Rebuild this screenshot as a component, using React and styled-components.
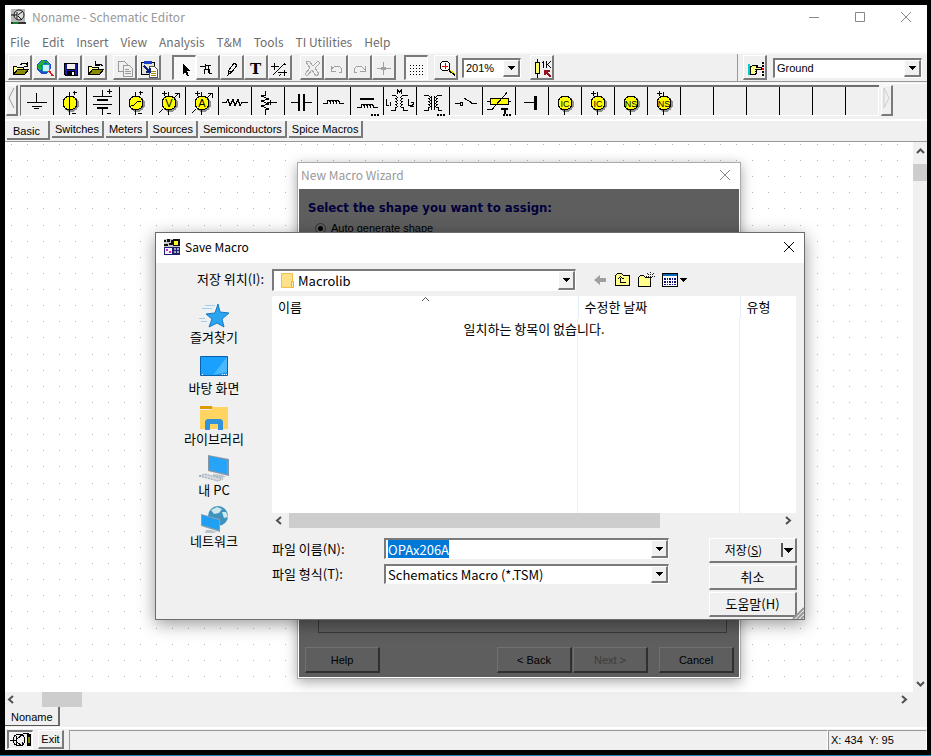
import React from 'react';
import styled, { createGlobalStyle, css } from 'styled-components';

const UI = '"Noto Sans CJK KR", "Noto Sans", sans-serif';
const CLASSIC = '"Liberation Sans", Arial, sans-serif';

const GlobalStyle = createGlobalStyle`
  * {
    box-sizing: border-box;
  }
  body {
    margin: 0;
    background: #000;
    font-family: ${CLASSIC};
    font-size: 11px;
    line-height: 16px;
    color: #000;
  }
  button, input, select {
    font: inherit;
    color: inherit;
    margin: 0;
    padding: 0;
    border-radius: 0;
  }
`;

const raised = css`
  border-style: solid;
  border-width: 1px 2px 2px 1px;
  border-color: #fff #7a7a7a #7a7a7a #fff;
`;

const sunken = css`
  border-style: solid;
  border-width: 2px 1px 1px 2px;
  border-color: #7a7a7a #fff #fff #7a7a7a;
`;

const Screen = styled.div`
  height: 100vh;
  padding: 5px 4px 5px 5px;
  border-bottom: 1px solid #1c82b4;
  background: #000;
`;

const AppWindow = styled.div`
  position: relative;
  display: flex;
  flex-direction: column;
  height: 100%;
  overflow: hidden;
  background: #f0f0f0;
`;

const TitleBar = styled.header`
  display: flex;
  align-items: center;
  gap: 5px;
  height: 25px;
  padding: 0 15px 1px 5px;
  background: #fff;
  color: #999;
`;

const Title = styled.h1`
  flex: 1;
  margin: 0;
  font: 400 12px/16px ${UI};
`;

const WindowButtons = styled.div`
  display: flex;
  gap: 34px;
`;

const PlainButton = styled.button`
  display: flex;
  border: 0;
  background: none;
`;

const MenuBar = styled.nav`
  display: flex;
  gap: 12px;
  height: 22px;
  padding: 4px 5px 0;
  background: #fff;
`;

const MenuItem = styled.a`
  color: #6d6d6d;
  font: 12px/16px ${UI};
  text-decoration: none;
`;

const Toolbar = styled.div`
  display: flex;
  align-items: center;
  height: 30px;
  border-top: 2px solid #fafafa;
  border-bottom: 1px solid #999;
  padding-left: 3px;
`;

const ToolGroup = styled.div`
  display: flex;
  align-items: center;
  gap: ${p => p.$gap || 0}px;
  margin-right: ${p => p.$after || 0}px;
`;

const ToolButton = styled.button`
  display: block;
  width: 24px;
  height: 25px;
  background: ${p => (p.$on ? '#f8f8f8' : '#f0f0f0')};
  ${p => (p.$on ? sunken : raised)}

  svg {
    display: block;
  }
`;

const Grip = styled.div`
  width: 1px;
  height: 27px;
  margin-right: ${p => p.$after || 0}px;
  margin-left: auto;
  background: #999;
`;

const ComboFrame = styled.div`
  position: relative;
  flex: ${p => (p.$width ? 'none' : 1)};
  width: ${p => (p.$width ? `${p.$width}px` : 'auto')};
  height: ${p => p.$height || 20}px;
  background: #fff;
  ${sunken}

  select, input {
    display: block;
    width: 100%;
    height: 100%;
    padding: 0 20px 0 ${p => p.$indent || 2}px;
    border: 0;
    outline: 0;
    background: #fff;
    appearance: none;
  }
  input::selection {
    background: #0078d7;
    color: #fff;
  }
`;

const Drop = styled.span`
  position: absolute;
  top: 0;
  right: 0;
  bottom: 0;
  display: flex;
  align-items: center;
  justify-content: center;
  width: 17px;
  background: #f0f0f0;
  pointer-events: none;
  ${raised}
`;

const ComboIcon = styled.span`
  position: absolute;
  top: 1px;
  left: 6px;
  display: flex;
  pointer-events: none;
`;

const PartsRow = styled.div`
  display: flex;
  gap: 2px;
  height: 38px;
  margin-top: 1px;
  padding: 1px 0 3px 1px;
  border-top: 1px solid #fff;
  border-bottom: 2px solid #fff;
`;

const PartsScroll = styled.button`
  width: 12px;
  background: #f0f0f0;
  ${raised}
`;

const Parts = styled.div`
  display: flex;
  border-top: 2px solid #6d6d6d;
  border-left: 1px solid #6d6d6d;
  border-bottom: 1px solid #fff;
`;

const Part = styled.button`
  width: 33px;
  border: 0;
  border-right: ${p => (p.$last ? '1px solid #fff' : '1px solid #000')};
  background: #f0f0f0;

  svg {
    display: block;
  }
`;

const Tabs = styled.div`
  display: flex;
  align-items: flex-start;
  gap: 2px;
  height: 21px;
  padding-left: 2px;
  border-bottom: 1px solid #999;
`;

const Tab = styled.button`
  height: ${p => (p.$on ? 19 : 17)}px;
  padding: 0 ${p => (p.$on ? 8 : 3)}px 0 ${p => (p.$on ? 6 : 3)}px;
  border: 0;
  border-right: 2px solid #7a7a7a;
  border-bottom: 2px solid #7a7a7a;
  background: #f0f0f0;
  line-height: ${p => (p.$on ? 20 : 17)}px;
`;

const Workspace = styled.main`
  display: flex;
  flex: 1;
  min-height: 0;
`;

const Sheet = styled.div`
  flex: 1;
  min-width: 0;
  overflow: hidden;
  background: #fff;

  svg {
    display: block;
  }
`;

const ScrollBar = styled.div`
  display: flex;
  flex-direction: ${p => (p.$vertical ? 'column' : 'row')};
  align-items: center;
  flex: none;
  width: ${p => (p.$vertical ? '14px' : 'auto')};
  height: ${p => (p.$vertical ? 'auto' : '15px')};
  padding: ${p => (p.$vertical ? '4px 0 3px' : `0 ${p.$end || 4}px 0 ${p.$start || 1}px`)};
  background: #f0f0f0;
`;

const Thumb = styled.div`
  width: ${p => (p.$vertical ? '100%' : p.$length)};
  height: ${p => (p.$vertical ? p.$length : '100%')};
  margin: ${p => (p.$vertical ? `${p.$before}px 0 auto` : `0 auto 0 ${p.$before}px`)};
  background: #cdcdcd;
`;

const DocTabs = styled.div`
  display: flex;
  align-items: flex-start;
  height: 21px;
  border-bottom: 1px solid #fff;
`;

const DocTab = styled.button`
  height: 19px;
  padding: 2px 5px 0 6px;
  border: 0;
  border-right: 2px solid #6d6d6d;
  border-bottom: 1px solid #555;
  background: #f0f0f0;
`;

const StatusBar = styled.footer`
  display: flex;
  height: 22px;
  padding: 1px 0 0 2px;
  border-top: 1px solid #fff;
`;

const StatusTool = styled.button`
  width: 26px;
  height: 19px;
  margin-right: 5px;
  background: #f0f0f0;
  line-height: 16px;
  ${p => (p.$on ? sunken : raised)}

  svg {
    display: block;
  }
`;

const StatusCell = styled.div`
  flex: ${p => (p.$width ? 'none' : 1)};
  width: ${p => (p.$width ? `${p.$width}px` : 'auto')};
  padding: 2px 2px 0;
  border-top: 1px solid #999;
  border-left: 1px solid #999;
  border-right: 1px solid #fff;
  line-height: 14px;
  white-space: pre;
`;

// Floating windows
const Wizard = styled.section`
  position: absolute;
  top: 157px;
  left: 292px;
  display: flex;
  flex-direction: column;
  width: 444px;
  height: 517px;
  padding: 0 1px 1px;
  border: 1px solid #aaa;
  background: #fff;
  box-shadow: 0 3px 12px rgba(0, 0, 0, 0.35);
`;

const WizardTitle = styled.div`
  display: flex;
  align-items: center;
  justify-content: space-between;
  height: 26px;
  padding: 0 8px 3px 2px;
  color: #999;
  font: 12px/16px ${UI};
`;

const WizardBody = styled.div`
  display: flex;
  flex-direction: column;
  flex: 1;
  padding: 10px 5px 4px 6px;
  background: #5e5e5e;
`;

const WizardHeading = styled.h2`
  margin: 0 3px 3px;
  color: #00003c;
  font: bold 13px/18px "DejaVu Sans Condensed", "DejaVu Sans", sans-serif;
`;

const RadioLabel = styled.label`
  display: flex;
  align-items: center;
  gap: 5px;
  margin-left: 10px;

  input {
    width: 11px;
    height: 11px;
    border: 1px solid #333;
    border-radius: 50%;
    background: radial-gradient(#000 0 2px, transparent 3px);
    appearance: none;
  }
`;

const ShapeBox = styled.div`
  flex: 1;
  margin: 8px 7px 14px 13px;
  border: 1px solid #3a3a3a;
`;

const WizardFooter = styled.div`
  display: flex;
  gap: 1px;
`;

const WizardButton = styled.button`
  width: 75px;
  height: 26px;
  margin-left: ${p => p.$before || 0}px;
  border-style: solid;
  border-width: 1px 2px 2px 1px;
  border-color: #707070 #303030 #303030 #707070;
  background: #5e5e5e;

  &:first-child {
    margin-right: auto;
  }
  &:disabled {
    color: #3c3c3c;
  }
`;

const Dialog = styled.section`
  position: absolute;
  top: 227px;
  left: 150px;
  width: 650px;
  border: 1px solid #6d6d6d;
  background: #f0f0f0;
  box-shadow: 0 4px 16px rgba(0, 0, 0, 0.4);
  font-family: ${UI};
  font-size: 13px;
`;

const DialogTitle = styled.div`
  display: flex;
  align-items: center;
  gap: 5px;
  height: 30px;
  padding: 0 9px 2px 8px;
  background: #fff;

  h2 {
    flex: 1;
    margin: 0;
    font-size: 12px;
    font-weight: 400;
  }
`;

const DialogGrid = styled.div`
  display: grid;
  grid-template-columns: 116px 1fr;
  padding: 6px 7px 2px 0;
`;

const LookLabel = styled.label`
  padding: 2px 8px 0 0;
  text-align: right;
`;

const LookRow = styled.div`
  display: flex;
  align-items: center;
  gap: 8px;
  margin-bottom: 5px;
`;

const LookTools = styled.div`
  display: flex;
  gap: 7px;
  margin-left: 9px;
`;

const Places = styled.nav`
  grid-row: 2 / span 2;
  display: flex;
  flex-direction: column;
  align-items: center;
  gap: 7px;
  padding-top: 6px;
`;

const Place = styled.a`
  display: flex;
  flex-direction: column;
  align-items: center;
  height: 44px;
  color: #000;
  text-decoration: none;
`;

const FileList = styled.div`
  padding-right: 1px;
`;

const FileTable = styled.table`
  width: 100%;
  height: 217px;
  border-collapse: collapse;
  table-layout: fixed;
  background: #fff;

  th {
    height: 22px;
    padding: 0 6px;
    border-right: 1px solid #e2eef8;
    font-weight: 400;
    text-align: left;
  }
  td {
    padding: 3px 0;
    text-align: center;
    vertical-align: top;
    background: linear-gradient(#e8f1fa, #e8f1fa) 305px 0 / 1px 100% no-repeat,
      linear-gradient(#e8f1fa, #e8f1fa) 467px 0 / 1px 100% no-repeat;
  }
  th:last-child {
    border: 0;
  }
`;

const NameHeader = styled.th`
  width: 306px;
  position: relative;

  svg {
    position: absolute;
    top: 0;
    left: 149px;
  }
`;

const DateHeader = styled.th`
  width: 162px;
`;

const SaveArea = styled.div`
  grid-column: 2;
  display: flex;
  justify-content: space-between;
  padding-top: 10px;
`;

const Fields = styled.div`
  display: grid;
  grid-template-columns: 112px 285px;
  row-gap: 5px;
  align-content: start;
  align-items: center;
`;

const Actions = styled.div`
  display: flex;
  flex-direction: column;
  gap: 2px;
`;

const ActionButton = styled.button`
  position: relative;
  width: 88px;
  height: 25px;
  padding-right: ${p => (p.$split ? 18 : 0)}px;
  background: #f0f0f0;
  font-size: ${p => (p.$split ? 12 : 13)}px;
  line-height: 20px;
  ${raised}

  svg {
    position: absolute;
    top: 4px;
    right: 1px;
  }
`;

const SizeGrip = styled.svg`
  position: absolute;
  right: 0;
  bottom: 0;
`;

const Arrow = () => (
  <svg width="7" height="4" shapeRendering="crispEdges">
    <path d="M0 0h7v1h-1v1h-1v1h-1v1h-1v-1h-1v-1h-1v-1h-1z" />
  </svg>
);

const CHEVRONS = {
  left: 'M7 2L3 5.5L7 9',
  right: 'M4 2L8 5.5L4 9',
  up: 'M2 7L5.5 3.5L9 7',
  down: 'M2 4L5.5 7.5L9 4'
};

const Chevron = ({ dir }) => (
  <svg width="11" height="11" fill="none" stroke="#505050" strokeWidth="2">
    <path d={CHEVRONS[dir]} />
  </svg>
);

const Close = ({ color }) => (
  <svg width="12" height="12" stroke={color} strokeWidth="1">
    <path d="M1 1L11 11M11 1L1 11" />
  </svg>
);

const Combo = ({ id, label, value, icon, ...rest }) => (
  <ComboFrame {...rest}>
    <select id={id} aria-label={label} defaultValue={value}>
      <option>{value}</option>
    </select>
    {icon ? <ComboIcon>{icon}</ComboIcon> : null}
    <Drop>
      <Arrow />
    </Drop>
  </ComboFrame>
);

const OPEN_FOLDER = (
  <>
    <path d="M4.5 17.5v-8h3l1 1h6v2" fill="#ffff8c" stroke="#000" />
    <path d="M4.5 17.5l4-5h11l-4 5z" fill="#8a8a00" stroke="#000" />
  </>
);

const TOOL_ICONS = {
  open: (
    <>
      {OPEN_FOLDER}
      <path d="M11.5 8l2-2h3l2 2M18.5 5v4h-4" fill="none" stroke="#000" />
    </>
  ),
  web: (
    <>
      <circle cx="10" cy="10" r="7" fill="#1d4fd0" />
      <path d="M4 7l4-4l4 1l-2 3l-3 1l1 3l-2 3l-2-3z" fill="#1fae3c" />
      <path d="M12 4l4 3v3l-3-2z" fill="#1fae3c" />
      <circle cx="12" cy="11" r="4" fill="#cfefff" stroke="#0a9dac" />
      <path d="M15 14l4 5" stroke="#e02020" strokeWidth="2" />
    </>
  ),
  save: (
    <>
      <path d="M5 6h14v13h-13l-1-1z" fill="#000" />
      <path d="M6 7h2v6h8v-6h2v11h-11l-1-1z" fill="#1a1aa8" />
      <path d="M8 7h8v5h-8z" fill="#f0f0f0" />
      <path d="M8 14h8v4h-8z" fill="#000" />
      <path d="M13 15h2v3h-2z" fill="#fff" />
    </>
  ),
  revert: (
    <>
      {OPEN_FOLDER}
      <path d="M18.5 9l-2-2h-3l-2 1M11.5 4v4h4" fill="none" stroke="#000" />
    </>
  ),
  copy: (
    <g fill="#f0f0f0" stroke="#9a9a9a">
      <path d="M4.5 4.5h6l3 3v7h-9z" />
      <path d="M9.5 8.5h6l3 3v8h-9z" />
      <path d="M11 12.5h4M11 14.5h6M11 16.5h6" />
    </g>
  ),
  paste: (
    <>
      <path d="M3.5 5.5h13v12h-13z" fill="#e4e4d4" stroke="#000" />
      <path d="M6 4h8v3h-8z" fill="#1a3ec8" />
      <path d="M11.5 9.5h5l3 3v8h-8z" fill="#fff" stroke="#555" />
      <path d="M13 14.5h5M13 16.5h5M13 18.5h5" stroke="#aa8800" />
      <path d="M6 9l6 6M12 11v4h-4" stroke="#0a1f80" strokeWidth="2" fill="none" />
    </>
  ),
  select: <path d="M9 6v10l2-2l2 4h2l-2-5h3z" fill="#000" />,
  wire: <path d="M3 9.5h6M8.5 7v5M9 8.5h5M7.5 12v5M8 12.5h4v4h3M11 9v7" fill="none" stroke="#000" />,
  pencil: <path d="M7 18l1-5l5-7l3 2l-5 7zM8 14l3 1M7 17l2-1" fill="none" stroke="#000" />,
  text: (
    <text x="5" y="17" fontFamily="DejaVu Serif, serif" fontWeight="bold" fontSize="15" fill="#000">
      T
    </text>
  ),
  formula: (
    <path
      d="M2 9.5h3M5.5 6v7M6 9.5h4M4 18L16 6M9 15.5h9M15.5 13v6M14 7h3M12 17l-2 2"
      fill="none"
      stroke="#000"
    />
  ),
  cut: <path d="M5 5l3-1l4 5l5-5l2 2l-5 5l4 6l-3 2l-4-6l-5 6l-2-2l5-6z" fill="none" stroke="#a8a8a8" />,
  undo: <path d="M6 9v5h5M6 13c3-5 10-5 11 0c0 2-1 3-3 3" fill="none" stroke="#a0a0a0" />,
  redo: <path d="M16 9v5h-5M16 13c-3-5-10-5-11 0c0 2 1 3 3 3" fill="none" stroke="#a0a0a0" />,
  node: (
    <>
      <path d="M4 11.5h14M10.5 5v13" stroke="#a0a0a0" />
      <path d="M8 10h5v3h-5z" fill="#a0a0a0" />
    </>
  ),
  grid: (
    <path d="M4 7.5h14M4 10.5h14M4 13.5h14M4 16.5h14" stroke="#000" strokeDasharray="1 2" />
  ),
  zoom: (
    <>
      <circle cx="10" cy="9" r="5" fill="#fff" stroke="#000" />
      <path d="M7 9.5h6M10.5 6v6" stroke="#e00" />
      <path d="M14 13l6 5" stroke="#000" strokeWidth="2" />
      <path d="M15 13l5 4" stroke="#dd0" />
    </>
  ),
  value: (
    <>
      <path d="M6.5 2v19" stroke="#000" />
      <path d="M4.5 5.5h4v11h-4z" fill="#ffff60" stroke="#000" />
      <path d="M12.5 4v7M11 5.5h2M15.5 4v7M16 8l4-4M16 7l4 4" stroke="#000" fill="none" />
      <path d="M14 13v5M13.5 13.5h5M14 14l6 6" stroke="#901020" fill="none" strokeWidth="2" />
    </>
  ),
  hand: (
    <>
      <path d="M4 7h2v11h-2z" fill="#0cc" />
      <path d="M6.5 9.5l3-1h4l-1 2h5v2h-5v4l-2 1h-4z" fill="#ffff8c" stroke="#000" />
      <path d="M11 12.5h3M11 14.5h2" stroke="#000" />
      <path d="M19 5v14" stroke="#000" strokeWidth="2" strokeDasharray="2 1" />
      <path d="M18 11h2v2h-2z" fill="#e00" />
    </>
  )
};

const Tool = ({ name, on }) => (
  <ToolButton $on={on} aria-label={name}>
    <svg width="21" height="21" shapeRendering="crispEdges">
      {TOOL_ICONS[name]}
    </svg>
  </ToolButton>
);

const Source = ({ mark, plus, minus, arrow, children }) => (
  <>
    <circle cx="17" cy="17" r="8" fill="#909090" stroke="none" />
    <circle cx="16" cy="16" r="7" fill="#ff0" />
    <path d="M15.5 23v5" />
    {plus ? <path d="M15.5 5v4M19 5.5h4M20.5 4v4" /> : null}
    {minus ? <path d="M18 26.5h4" /> : null}
    {arrow ? <path d="M6 26l4-4M21 11l5-5M22 6.5h4v4" /> : null}
    {mark ? (
      <text x="16" y="20" textAnchor="middle" fontSize={mark.length > 1 ? 9 : 11} fill="#000" stroke="none">
        {mark}
      </text>
    ) : null}
    {children}
  </>
);

const MORE = <path d="M20 28h8" strokeWidth="2" strokeDasharray="2 1" />;

const PLUS_LEAD = <path d="M15.5 5v4M9 6.5h5M11.5 4v5" />;

const HUMPS = 'v-2l1-1h1l1 1v2v-2l1-1h1l1 1v2v-2l1-1h1l1 1v2v-2l1-1h1l1 1v2';

const PARTS = [
  {
    name: 'Ground',
    icon: <path d="M15.5 6v10M6 15.5h20M11 19.5h10M13 21.5h5" />
  },
  {
    name: 'Current source',
    icon: (
      <Source plus minus>
        <path d="M15.5 9v14" />
      </Source>
    )
  },
  {
    name: 'Battery',
    icon: (
      <>
        <path d="M15.5 3v7M15.5 22v6M6 9.5h19M6 17.5h19M20 4.5h5M22.5 2v5M20 26.5h4" />
        <path d="M10 13h11M10 21h11" strokeWidth="2" />
      </>
    )
  },
  {
    name: 'Generator',
    icon: (
      <Source plus minus>
        <path d="M11 18h3l4-4h3" />
      </Source>
    )
  },
  { name: 'Voltage source', icon: <Source mark="V" arrow>{PLUS_LEAD}</Source> },
  { name: 'Ampere source', icon: <Source mark="A" arrow>{PLUS_LEAD}</Source> },
  {
    name: 'Resistor',
    icon: <path d="M3 15.5h4l2-3l2 6l3-6l2 6l3-6l2 6l2-3h6" />
  },
  {
    name: 'Potentiometer',
    icon: <path d="M13.5 4v4l-4 1l7 3l-7 2l7 3l-7 2l7 3l-3 1v5M15 15.5h10M18 13v5" />
  },
  {
    name: 'Capacitor',
    icon: (
      <>
        <path d="M6 15.5h8M19 15.5h8" />
        <path d="M14 7v17M19 7v17" strokeWidth="2" />
      </>
    )
  },
  { name: 'Inductor', icon: <path d={`M5 16.5h4${HUMPS}h5`} /> },
  {
    name: 'Core inductor',
    icon: (
      <>
        <path d={`M6 20.5h4${HUMPS}h5`} />
        <path d="M9 12h14" strokeWidth="2" />
        {MORE}
      </>
    )
  },
  {
    name: 'Coupled inductors',
    icon: (
      <>
        <path d="M8 8.5h3c3 1 3 3 0 3c3 1 3 3 0 3c3 1 3 3 0 3c3 1 3 3 0 3v3h-4M24 8.5h-5c-3 1-3 3 0 3c-3 1-3 3 0 3c-3 1-3 3 0 3c-3 1-3 3 0 3v3h5" />
        <path d="M13.5 7v-4l2 2l2-2v4M2.5 12v6h2M24.5 12v6h2" />
        <path d="M6.5 15v4M27 15.5h2v2l-2 2h3" />
      </>
    )
  },
  {
    name: 'Transformer',
    icon: (
      <>
        <path d="M7 8.5h4c3 1 3 3 0 3c3 1 3 3 0 3c3 1 3 3 0 3c3 1 3 3 0 3v3h-4M25 8.5h-4c-3 1-3 3 0 3c-3 1-3 3 0 3c-3 1-3 3 0 3c-3 1-3 3 0 3v3h4M14.5 9v14M17.5 9v14" />
        {MORE}
      </>
    )
  },
  {
    name: 'Switch',
    icon: <path d="M5 16.5h5M10.5 15v3h2v-3zM14 11l8 5M21 16.5h6" />
  },
  {
    name: 'Thermistor',
    icon: (
      <>
        <path d="M4 14.5h24" />
        <path d="M7.5 11.5h18v6h-18z" fill="#ff0" />
        <path d="M4 22.5h5L24 5.5" />
        <path d="M18 22h7M22 21v6" strokeWidth="2" />
        {MORE}
      </>
    )
  },
  {
    name: 'Terminal',
    icon: (
      <>
        <path d="M8 15.5h11" />
        <path d="M19.5 9v14" strokeWidth="3" />
      </>
    )
  },
  { name: 'Initial condition', icon: <Source mark="IC" /> },
  { name: 'Initial condition 2', icon: <Source mark="IC">{PLUS_LEAD}</Source> },
  { name: 'Nodeset', icon: <Source mark="NS" /> },
  { name: 'Nodeset 2', icon: <Source mark="NS">{PLUS_LEAD}</Source> },
  ...[1, 2, 3, 4, 5, 6].map(n => ({ name: `Empty ${n}`, icon: null }))
];

const MENUS = ['File', 'Edit', 'Insert', 'View', 'Analysis', 'T&M', 'Tools', 'TI Utilities', 'Help'];

const TABS = ['Basic', 'Switches', 'Meters', 'Sources', 'Semiconductors', 'Spice Macros'];

const PLACES = [
  {
    name: '즐겨찾기',
    icon: (
      <>
        <path d="M20 2l2 8l9 1l-7 6l2 8l-7-4l-8 4l3-8l-6-5l9-1z" fill="#2aa5f0" stroke="#1579c4" />
        <path d="M7 3.5h10M4 6.5h10M1 16.5h6M3 19.5h6" stroke="#9fd0ee" />
      </>
    )
  },
  {
    name: '바탕 화면',
    icon: (
      <>
        <path d="M2.5 3.5h27v19h-27z" fill="#1aa0ff" stroke="#0a63a8" />
        <path d="M29 4v15l-14 3z" fill="#4ab8ff" />
        <path d="M4 21.5h2M24 21.5h5" stroke="#fff" strokeDasharray="1 1" />
      </>
    )
  },
  {
    name: '라이브러리',
    icon: (
      <>
        <path d="M2 2h12l1 3h-13z" fill="#dd9a05" />
        <path d="M2 6h11l2-3h15v22h-28z" fill="#ffd460" />
        <path d="M7 26v-9l2-2h14l2 2v9h-5v-6h-8v6z" fill="#3292dc" />
      </>
    )
  },
  {
    name: '내 PC',
    icon: (
      <>
        <path d="M10 0l21 4v17l-21-5z" fill="#8596a5" />
        <path d="M11 1l18 4v14l-18-4z" fill="#27a4f8" />
        <path d="M15 19l9 1l4 2l-5 1l-8-2z" fill="#b9c3cb" />
        <path d="M1 21l6-2l18 5l-5 2z" fill="#d3d9de" stroke="#9aa5ae" strokeDasharray="2 1" />
      </>
    )
  },
  {
    name: '네트워크',
    icon: (
      <>
        <circle cx="20" cy="10" r="10" fill="#3e93bd" />
        <path d="M13 4l6-3l5 2l-3 4l-5 1zM24 6l4 0l2 5l-4 1z" fill="#cfe8ee" />
        <path d="M3 8l19 5v13l-19-6z" fill="#8aa0b0" />
        <path d="M4 9l17 5v10l-17-5z" fill="#1fa0f4" />
        <path d="M8 24l5 0l6 2l-4 1h-8z" fill="#b9c3cb" />
      </>
    )
  }
];

const FOLDER = (
  <svg width="15" height="17">
    <path d="M1.5 1.5h11v14h-11z" fill="#ffe08a" stroke="#f0c04a" />
    <path d="M11.5 9.500h2v6h-2z" fill="#fff0b0" stroke="#e5b13a" />
  </svg>
);

// The grid pitch of the sheet is a little over 16px, so every dot is snapped on its own
const GRID = [];
for (let row = 0; row < 80; row++) {
  for (let col = 0; col < 140; col++) {
    GRID.push(`M${Math.round(6 + col * 16.11)} ${Math.round(2 + row * 16.12)}h1v1h-1z`);
  }
}

const Status = () => (
  <StatusBar>
    <StatusTool $on aria-label="Schematic">
      <svg width="22" height="17" fill="none" stroke="#000" shapeRendering="crispEdges">
        <circle cx="10" cy="8" r="6" />
        <path d="M1 8.5h6M7.5 4v9M8 7l6-5M8 10l5 4M10 13h3v-3M14 1.5h6" />
        <path d="M19.5 2v12" strokeWidth="4" />
        <path d="M19.5 5v6" stroke="#880" strokeWidth="2" />
      </svg>
    </StatusTool>
    <StatusTool>Exit</StatusTool>
    <StatusCell />
    <StatusCell $width={99}>X: 434  Y: 95</StatusCell>
  </StatusBar>
);

const MacroWizard = () => (
  <Wizard>
    <WizardTitle>
      New Macro Wizard
      <PlainButton aria-label="Close wizard">
        <Close color="#888" />
      </PlainButton>
    </WizardTitle>
    <WizardBody>
      <WizardHeading>Select the shape you want to assign:</WizardHeading>
      <RadioLabel>
        <input type="radio" name="shape" defaultChecked />
        Auto generate shape
      </RadioLabel>
      <ShapeBox />
      <WizardFooter>
        <WizardButton>Help</WizardButton>
        <WizardButton>&lt; Back</WizardButton>
        <WizardButton disabled>Next &gt;</WizardButton>
        <WizardButton $before={10}>Cancel</WizardButton>
      </WizardFooter>
    </WizardBody>
  </Wizard>
);

class SaveDialog extends React.Component {
  fileName = React.createRef();

  componentDidMount() {
    this.fileName.current.focus();
    this.fileName.current.select();
  }

  render() {
    return (
      <Dialog>
        <DialogTitle>
          <svg width="16" height="16" shapeRendering="crispEdges">
            <path d="M0 0h16v16h-16z" fill="#c8c8c8" />
            <path d="M0 1h2v2h-2zM3 0h3v3h-3zM0 5h4v2h-4zM7 1h2v5h-2zM5 4h2v2h-2z" fill="#111" />
            <path d="M9 0h7v7h-7z" fill="#111" />
            <path d="M10 2h4v4h-4z" fill="#ff2" />
            <path d="M0 8h16v8h-16z" fill="#202070" />
            <path d="M1 9h7v6h-7z" fill="#f4f4ff" />
            <path d="M2 10h2v2h-2zM5 12h2v2h-2z" fill="#e020d0" />
            <path d="M10 9h2v2h-2zM13 9h2v2h-2zM10 12h2v2h-2zM13 12h2v2h-2z" fill="#aab" />
          </svg>
          <h2>Save Macro</h2>
          <PlainButton aria-label="Close">
            <Close color="#000" />
          </PlainButton>
        </DialogTitle>
        <DialogGrid>
          <LookLabel htmlFor="look-in">저장 위치(I):</LookLabel>
          <LookRow>
            <Combo id="look-in" value="Macrolib" $width={304} $height={22} $indent={24} icon={FOLDER} />
            <LookTools>
              <PlainButton aria-label="Back">
                <svg width="15" height="16">
                  <path d="M1 8l6-5v3h6v4h-6v3z" fill="#a0a0a0" />
                </svg>
              </PlainButton>
              <PlainButton aria-label="Up one level">
                <svg width="16" height="16" shapeRendering="crispEdges">
                  <path d="M0.5 13.5v-10l2-2h4l2 2h6v10z" fill="#ffff8c" stroke="#000" />
                  <path d="M5.5 10v-4M3 7l2.500-2.500l3 2.500M5 10.5h6" fill="none" stroke="#000" />
                </svg>
              </PlainButton>
              <PlainButton aria-label="New folder">
                <svg width="17" height="16" shapeRendering="crispEdges">
                  <path d="M0.5 14.5v-9l2-2h3l2 2h5v9z" fill="#ffff8c" stroke="#000" />
                  <path d="M12.5 0v9M8 4.5h9M9 1l7 7M16 1l-7 7" stroke="#222" strokeDasharray="1 1" />
                </svg>
              </PlainButton>
              <PlainButton aria-label="View">
                <svg width="26" height="16" shapeRendering="crispEdges">
                  <path d="M0.5 1.5h15v13h-15z" fill="#fff" stroke="#000" />
                  <path d="M1 2h14v2h-14z" fill="#0a64b8" />
                  <path
                    d="M2 6.5h12M2 7.5h12M2 9.5h12M2 10.5h12M2 12.5h12"
                    stroke="#10107a"
                    strokeDasharray="2 1 1 1"
                  />
                  <path d="M18 6h7l-3.5 4z" />
                </svg>
              </PlainButton>
            </LookTools>
          </LookRow>
          <Places>
            {PLACES.map(place => (
              <Place href="#" key={place.name}>
                <svg width="32" height="27">{place.icon}</svg>
                {place.name}
              </Place>
            ))}
          </Places>
          <FileList>
            <FileTable>
              <thead>
                <tr>
                  <NameHeader>
                    이름
                    <svg width="9" height="6" fill="none" stroke="#555">
                      <path d="M1 5l3.5-3.5l3.5 3.5" />
                    </svg>
                  </NameHeader>
                  <DateHeader>수정한 날짜</DateHeader>
                  <th>유형</th>
                </tr>
              </thead>
              <tbody>
                <tr>
                  <td colSpan="3">일치하는 항목이 없습니다.</td>
                </tr>
              </tbody>
            </FileTable>
            <ScrollBar $start={2} $end={3}>
              <Chevron dir="left" />
              <Thumb $before={4} $length="371px" />
              <Chevron dir="right" />
            </ScrollBar>
          </FileList>
          <SaveArea>
            <Fields>
              <label htmlFor="file-name">파일 이름(N):</label>
              <ComboFrame $height={21}>
                <input id="file-name" ref={this.fileName} defaultValue="OPAx206A" />
                <Drop>
                  <Arrow />
                </Drop>
              </ComboFrame>
              <label htmlFor="file-type">파일 형식(T):</label>
              <Combo id="file-type" value="Schematics Macro (*.TSM)" />
            </Fields>
            <Actions>
              <ActionButton $split>
                저장(<u>S</u>)
                <svg width="14" height="14" shapeRendering="crispEdges">
                  <path d="M1.5 0v14" stroke="#555" strokeWidth="2" />
                  <path d="M4 5h9l-4.5 5z" />
                </svg>
              </ActionButton>
              <ActionButton>취소</ActionButton>
              <ActionButton>도움말(H)</ActionButton>
            </Actions>
          </SaveArea>
        </DialogGrid>
        <SizeGrip width="12" height="12" stroke="#999">
          <path d="M1 12L12 1M5 12L12 5M9 12L12 9" strokeWidth="2" />
        </SizeGrip>
      </Dialog>
    );
  }
}

const App = () => (
  <>
    <GlobalStyle />
    <Screen>
      <AppWindow>
        <TitleBar>
          <svg width="17" height="16">
            <path d="M1 0h14v15h-14z" fill="#b8b8b8" />
            <circle cx="9" cy="6" r="5" fill="#ddd" stroke="#222" />
            <path d="M1 6h6M7 3v7M8 6l5-4M8 7l4 4" stroke="#111" strokeWidth="1" />
            <path d="M1 14h15" stroke="#333" strokeWidth="2" />
            <path d="M3 14h5" stroke="#0a8a20" strokeWidth="2" />
          </svg>
          <Title>Noname - Schematic Editor</Title>
          <WindowButtons>
            <PlainButton aria-label="Minimize">
              <svg width="12" height="12" stroke="#888">
                <path d="M1 6.5h10" />
              </svg>
            </PlainButton>
            <PlainButton aria-label="Maximize">
              <svg width="12" height="12" stroke="#888" fill="none">
                <path d="M1.5 1.5h9v9h-9z" />
              </svg>
            </PlainButton>
            <PlainButton aria-label="Close editor">
              <Close color="#888" />
            </PlainButton>
          </WindowButtons>
        </TitleBar>
        <MenuBar>
          {MENUS.map(menu => (
            <MenuItem href="#" key={menu}>
              {menu}
            </MenuItem>
          ))}
        </MenuBar>
        <Toolbar>
          <ToolGroup $gap={1} $after={6}>
            <Tool name="open" />
            <Tool name="web" />
            <Tool name="save" />
            <Tool name="revert" />
          </ToolGroup>
          <ToolGroup $after={11}>
            <Tool name="copy" />
            <Tool name="paste" />
          </ToolGroup>
          <ToolGroup $after={8}>
            <Tool name="select" on />
            <Tool name="wire" />
            <Tool name="pencil" />
            <Tool name="text" />
            <Tool name="formula" />
          </ToolGroup>
          <ToolGroup $after={8}>
            <Tool name="cut" />
            <Tool name="undo" />
            <Tool name="redo" />
            <Tool name="node" />
          </ToolGroup>
          <ToolGroup $after={6}>
            <Tool name="grid" on />
          </ToolGroup>
          <ToolGroup $gap={4} $after={9}>
            <Tool name="zoom" />
            <Combo label="Zoom" value="201%" $width={59} />
          </ToolGroup>
          <Tool name="value" />
          <Grip $after={5} />
          <ToolGroup $gap={6} $after={5}>
            <Tool name="hand" />
            <Combo label="Part" value="Ground" $width={149} />
          </ToolGroup>
        </Toolbar>
        <PartsRow>
          <PartsScroll aria-label="Previous parts">
            <svg width="9" height="24" fill="none" stroke="#999">
              <path d="M7 2L2 12L7 22" />
            </svg>
          </PartsScroll>
          <Parts>
            {PARTS.map((part, i) => (
              <Part key={part.name} aria-label={part.name} $last={i === PARTS.length - 1}>
                <svg width="32" height="30" fill="none" stroke="#000" shapeRendering="crispEdges">
                  {part.icon}
                </svg>
              </Part>
            ))}
          </Parts>
          <PartsScroll aria-label="Next parts">
            <svg width="9" height="24" fill="none" stroke="#ccc">
              <path d="M2 2L7 12L2 22z" />
            </svg>
          </PartsScroll>
        </PartsRow>
        <Tabs>
          {TABS.map((tab, i) => (
            <Tab key={tab} $on={i === 0}>
              {tab}
            </Tab>
          ))}
        </Tabs>
        <Workspace>
          <Sheet>
            <svg width="100%" height="100%" shapeRendering="crispEdges">
              <path d={GRID.join('')} fill="#b4b4b4" />
            </svg>
          </Sheet>
          <ScrollBar $vertical>
            <Chevron dir="up" />
            <Thumb $vertical $before={7} $length="17px" />
            <Chevron dir="down" />
          </ScrollBar>
        </Workspace>
        <ScrollBar $end={18}>
          <Chevron dir="left" />
          <Thumb $before={25} $length="40px" />
          <Chevron dir="right" />
        </ScrollBar>
        <DocTabs>
          <DocTab>Noname</DocTab>
        </DocTabs>
        <Status />
        <MacroWizard />
        <SaveDialog />
      </AppWindow>
    </Screen>
  </>
);

export default App;
